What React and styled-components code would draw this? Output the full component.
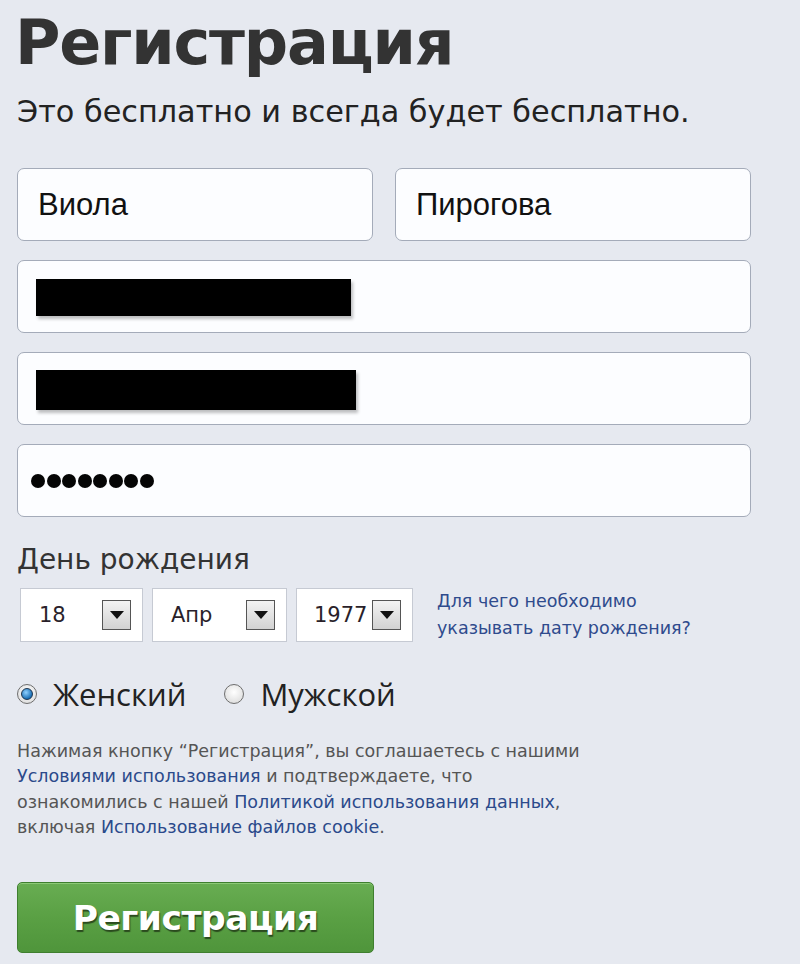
import React from "react";
import styled, { createGlobalStyle } from "styled-components";

const GlobalStyle = createGlobalStyle`
  html, body {
    margin: 0;
    padding: 0;
    background: #e6e9f0;
  }
`;

const Page = styled.div`
  width: 800px;
  min-height: 964px;
  box-sizing: border-box;
  padding: 10px 49px 0 17px;
  background: #e6e9f0;
  font-family: "DejaVu Sans", Tahoma, sans-serif;
  color: #333;
`;

const Title = styled.h1`
  margin: 0 0 0 -2px;
  font-size: 62px;
  line-height: 66px;
  font-weight: bold;
  letter-spacing: -1.2px;
  color: #333;
`;

const Subtitle = styled.p`
  margin: 18px 0 0 0;
  font-size: 30.3px;
  line-height: 36px;
  color: #222;
`;

const Form = styled.form`
  display: flex;
  flex-direction: column;
  gap: 19px;
  margin-top: 38px;
`;

const NameRow = styled.div`
  display: grid;
  grid-template-columns: 1fr 1fr;
  gap: 22px;
`;

const Field = styled.div`
  height: 73px;
  box-sizing: border-box;
  border: 1px solid #a4abb9;
  border-radius: 7px;
  background: #fcfdff;
  display: flex;
  align-items: center;
  padding-left: ${(p) => p.$pad || 20}px;
  font-family: "Liberation Sans", Arial, sans-serif;
  font-size: 31px;
  color: #111;
`;

const Redacted = styled.span`
  display: block;
  width: ${(p) => p.$w}px;
  height: ${(p) => p.$h}px;
  margin-top: ${(p) => p.$dy || 0}px;
  background: #000;
  box-shadow: 2px 3px 3px rgba(0, 0, 0, 0.25);
`;

const Dots = styled.span`
  display: flex;
  gap: 1.5px;
`;

const Dot = styled.span`
  width: 14px;
  height: 14px;
  border-radius: 50%;
  background: #050505;
`;

const BirthLabel = styled.div`
  margin-top: 26px;
  font-size: 28px;
  line-height: 34px;
  color: #333;
`;

const DateRow = styled.div`
  display: flex;
  align-items: center;
  gap: 9px;
  margin-top: 11px;
  padding-left: 3px;
`;

const Select = styled.div`
  width: ${(p) => p.$w}px;
  height: 54px;
  box-sizing: border-box;
  border: 1px solid #c6cad3;
  background: #fff;
  display: flex;
  align-items: center;
  justify-content: space-between;
  padding: 0 11px 0 ${(p) => p.$pl || 18}px;
  font-size: 21px;
  color: #2a1f2a;
`;

const ArrowBox = styled.span`
  width: 29px;
  height: 30px;
  box-sizing: border-box;
  border: 1px solid #555;
  background: linear-gradient(#f3f3f3, #d2d2d2);
  display: flex;
  align-items: center;
  justify-content: center;
`;

const HelpLink = styled.a`
  margin-left: 15px;
  font-size: 17.5px;
  line-height: 27px;
  color: #2f4b8d;
  text-decoration: none;
`;

const GenderRow = styled.div`
  display: flex;
  align-items: center;
  height: 40px;
  margin-top: 32px;
`;

const RadioOption = styled.label`
  display: flex;
  align-items: center;
  gap: 16px;
  margin-right: 38px;
  font-family: "Open Sans", "DejaVu Sans", sans-serif;
  font-size: 31px;
  color: #222;
`;

const Radio = styled.span`
  width: 20px;
  height: 20px;
  box-sizing: border-box;
  border-radius: 50%;
  border: 1px solid #6e6e6e;
  background: radial-gradient(circle at 50% 40%, #ffffff, #d6d6d6);
  display: flex;
  align-items: center;
  justify-content: center;
  &::after {
    content: "";
    display: ${(p) => (p.$checked ? "block" : "none")};
    width: 10px;
    height: 10px;
    border-radius: 50%;
    border: 1px solid #1d3550;
    background: radial-gradient(circle at 40% 35%, #8fd0ff, #1a6fb5 70%, #0f4c86);
  }
`;

const Terms = styled.p`
  margin: 25px 0 0 0;
  font-size: 17.5px;
  line-height: 25.3px;
  color: #555;
`;

const TermsLink = styled.a`
  color: #2b4a8b;
  text-decoration: none;
`;

const SubmitButton = styled.button`
  display: block;
  margin-top: 42px;
  width: 357px;
  height: 71px;
  border: 1px solid #3f7f2f;
  border-radius: 5px;
  background: linear-gradient(#68ad52, #5aa044 50%, #4f953b);
  box-shadow: inset 0 1px 0 #8cc977;
  font-family: "DejaVu Sans", Tahoma, sans-serif;
  font-weight: bold;
  font-size: 34.5px;
  letter-spacing: -0.5px;
  color: #fff;
  text-shadow: 1px 2px 1px #2a4a1e;
  cursor: pointer;
`;

const Arrow = () => (
  <svg width="14" height="8" viewBox="0 0 14 8">
    <path d="M0 0 H14 L7 8 Z" fill="#111" />
  </svg>
);

const DateSelect = ({ value, width, pl }) => (
  <Select $w={width} $pl={pl}>
    <span>{value}</span>
    <ArrowBox>
      <Arrow />
    </ArrowBox>
  </Select>
);

export default function App() {
  return (
    <>
      <GlobalStyle />
      <Page>
        <Title>Регистрация</Title>
        <Subtitle>Это бесплатно и всегда будет бесплатно.</Subtitle>
        <Form onSubmit={(e) => e.preventDefault()}>
          <NameRow>
            <Field>Виола</Field>
            <Field>Пирогова</Field>
          </NameRow>
          <Field $pad={18}>
            <Redacted $w={315} $h={37} $dy={2} />
          </Field>
          <Field $pad={18}>
            <Redacted $w={320} $h={40} $dy={2} />
          </Field>
          <Field $pad={13}>
            <Dots>
              {Array.from({ length: 8 }).map((_, i) => (
                <Dot key={i} />
              ))}
            </Dots>
          </Field>
        </Form>
        <BirthLabel>День рождения</BirthLabel>
        <DateRow>
          <DateSelect value="18" width={123} />
          <DateSelect value="Апр" width={135} />
          <DateSelect value="1977" width={117} pl={17} />
          <HelpLink href="#">
            Для чего необходимо
            <br />
            указывать дату рождения?
          </HelpLink>
        </DateRow>
        <GenderRow>
          <RadioOption>
            <Radio $checked />
            Женский
          </RadioOption>
          <RadioOption>
            <Radio />
            Мужской
          </RadioOption>
        </GenderRow>
        <Terms>
          Нажимая кнопку “Регистрация”, вы соглашаетесь с нашими
          <br />
          <TermsLink href="#">Условиями использования</TermsLink> и подтверждаете, что
          <br />
          ознакомились с нашей <TermsLink href="#">Политикой использования данных</TermsLink>,
          <br />
          включая <TermsLink href="#">Использование файлов cookie</TermsLink>.
        </Terms>
        <SubmitButton type="button">Регистрация</SubmitButton>
      </Page>
    </>
  );
}
